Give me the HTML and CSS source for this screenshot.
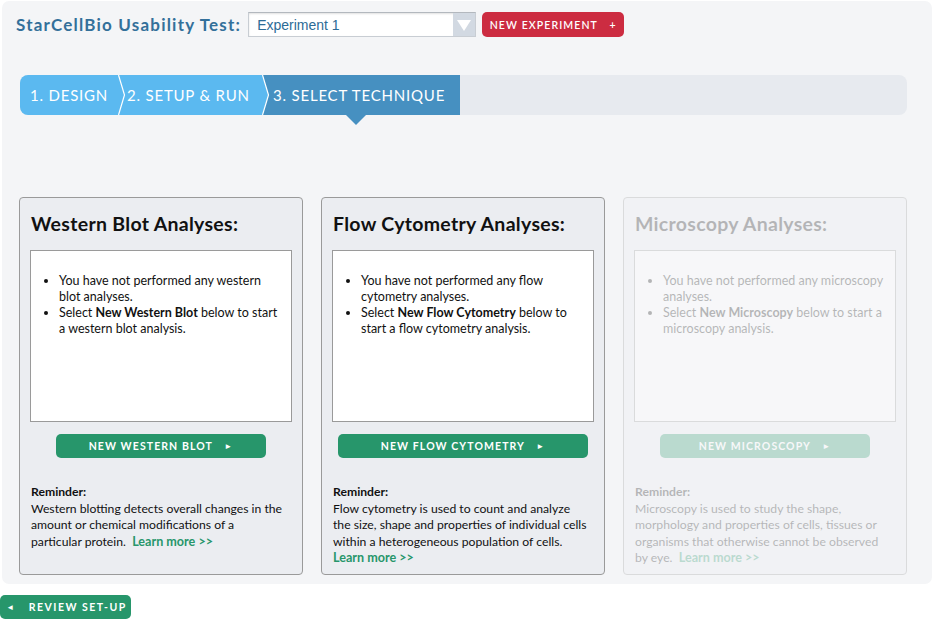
FILE: index.html
```html
<!DOCTYPE html>
<html>
<head>
<meta charset="utf-8">
<link rel="stylesheet" href="styles.css">
</head>
<body>
<div class="panel">
  <header class="topbar">
    <h1 class="app-title">StarCellBio Usability Test:</h1>
    <div class="select">
      <span class="select-value">Experiment 1</span>
      <span class="select-arrow"><svg width="14" height="12" viewBox="0 0 14 12"><polygon points="0,1 14,1 7,12" fill="#fff"/></svg></span>
    </div>
    <button class="btn btn-red">NEW EXPERIMENT <span class="plus">+</span></button>
  </header>

  <nav class="steps">
    <div class="step step-light step-first">1. DESIGN</div>
    <svg class="sep" width="8" height="40" viewBox="0 0 8 40"><polygon points="0,0 8,0 8,40 0,40" fill="#5bb9f0"/><polyline points="0.5,0 6.5,20 0.5,40" fill="none" stroke="#fff" stroke-width="1.2"/></svg>
    <div class="step step-light step-second">2. SETUP &amp; RUN</div>
    <svg class="sep" width="8" height="40" viewBox="0 0 8 40"><polygon points="0,0 8,0 8,40 0,40" fill="#4690c1"/><polygon points="0,0 0.5,0 6.5,20 0.5,40 0,40" fill="#5bb9f0"/><polyline points="0.5,0 6.5,20 0.5,40" fill="none" stroke="#fff" stroke-width="1.2"/></svg>
    <div class="step step-dark">3. SELECT TECHNIQUE<span class="pointer"></span></div>
  </nav>

  <section class="cards">
    <article class="card">
      <h2 class="card-title">Western Blot Analyses:</h2>
      <div class="card-box">
        <ul>
          <li>You have not performed any western blot analyses.</li>
          <li>Select <b>New Western Blot</b> below to start a western blot analysis.</li>
        </ul>
      </div>
      <button class="btn btn-green btn-card">NEW WESTERN BLOT <span class="tri">&#9658;</span></button>
      <div class="reminder">
        <b>Reminder:</b><br>
        Western blotting detects overall changes in the amount or chemical modifications of a particular protein.&nbsp; <a class="learn">Learn more &gt;&gt;</a>
      </div>
    </article>

    <article class="card">
      <h2 class="card-title">Flow Cytometry Analyses:</h2>
      <div class="card-box">
        <ul>
          <li>You have not performed any flow cytometry analyses.</li>
          <li>Select <b>New Flow Cytometry</b> below to start a flow cytometry analysis.</li>
        </ul>
      </div>
      <button class="btn btn-green btn-card btn-wide">NEW FLOW CYTOMETRY <span class="tri">&#9658;</span></button>
      <div class="reminder">
        <b>Reminder:</b><br>
        Flow cytometry is used to count and analyze the size, shape and properties of individual cells within a heterogeneous population of cells.<br>
        <a class="learn">Learn more &gt;&gt;</a>
      </div>
    </article>

    <article class="card card-disabled">
      <h2 class="card-title">Microscopy Analyses:</h2>
      <div class="card-box">
        <ul>
          <li>You have not performed any microscopy analyses.</li>
          <li>Select <b>New Microscopy</b> below to start a microscopy analysis.</li>
        </ul>
      </div>
      <button class="btn btn-green btn-card">NEW MICROSCOPY <span class="tri">&#9658;</span></button>
      <div class="reminder">
        <b>Reminder:</b><br>
        Microscopy is used to study the shape, morphology and properties of cells, tissues or organisms that otherwise cannot be observed by eye.&nbsp; <a class="learn">Learn more &gt;&gt;</a>
      </div>
    </article>
  </section>
</div>
<button class="btn btn-green btn-review"><span class="tri-left">&#9668;</span> REVIEW SET-UP</button>
</body>
</html>
```
FILE: styles.css
```css
* { box-sizing: border-box; }
html, body { margin: 0; padding: 0; background: #fff; }
body {
  font-family: Lato, "Noto Sans", sans-serif;
  color: #111;
  width: 936px;
  height: 624px;
  overflow: hidden;
}
.panel {
  margin: 1px 4px 0 2px;
  width: 930px;
  height: 583px;
  background: #f4f5f7;
  border-radius: 7px;
  padding: 11px 0 0 14px;
}
.topbar {
  display: flex;
  align-items: center;
  height: 25px;
}
.app-title {
  margin: 0 7px 0 0;
  font-size: 17px;
  font-weight: 700;
  letter-spacing: 1.2px;
  color: #33709a;
  white-space: nowrap;
}
.select {
  display: flex;
  width: 228px;
  height: 25px;
  background: #fff;
  border: 1px solid #c8cdd3;
  border-top-color: #b3b8be;
  box-shadow: inset 0 1px 2px rgba(0,0,0,0.12);
}
.select-value {
  flex: 1;
  font-family: "Liberation Sans", Arial, sans-serif;
  font-size: 14px;
  color: #2d6b96;
  padding: 4px 0 0 8px;
}
.select-arrow {
  width: 22px;
  background: #d2d9e2;
  display: flex;
  align-items: center;
  justify-content: center;
}
.btn {
  border: none;
  font-family: Lato, "Noto Sans", sans-serif;
  color: #fff;
  font-weight: 700;
  font-size: 10.5px;
  letter-spacing: 1.1px;
  cursor: pointer;
  border-radius: 5px;
  padding: 0;
  white-space: nowrap;
}
.btn-red {
  margin-left: 6px;
  width: 142px;
  height: 25px;
  background: #cc2c41;
  font-weight: 600;
}
.btn-red .plus { margin-left: 8px; }
.steps {
  margin-top: 38px;
  width: 887px;
  margin-left: 4px;
  height: 40px;
  background: #e7eaef;
  border-radius: 8px;
  display: flex;
}
.step {
  height: 40px;
  color: #fff;
  font-size: 15px;
  letter-spacing: 0.8px;
  display: flex;
  align-items: center;
  position: relative;
  white-space: nowrap;
  flex: none;
}
.step-light { background: #5bb9f0; }
.step-first { border-radius: 8px 0 0 8px; padding-left: 10px; width: 98px; }
.step-second { padding-left: 1px; width: 136px; }
.step-dark { background: #4690c1; padding-left: 3px; width: 190px; }
.sep { display: block; flex: none; }
.pointer {
  position: absolute;
  left: 76px;
  bottom: -10px;
  width: 0; height: 0;
  border-left: 10px solid transparent;
  border-right: 10px solid transparent;
  border-top: 10px solid #4690c1;
}
.cards {
  margin-top: 82px;
  margin-left: 3px;
  display: flex;
  gap: 18px;
}
.card {
  width: 284px;
  height: 378px;
  background: #ebedf1;
  border: 1px solid #9a9a9a;
  border-radius: 4px;
  padding: 10px 10px 0 10px;
  display: flex;
  flex-direction: column;
}
.card > * { flex: none; }
.card-disabled { opacity: 0.28; }
.card-title {
  margin: 3px 0 0 1px;
  font-size: 19.5px;
  font-weight: 700;
  letter-spacing: 0.3px;
  line-height: 26px;
  height: 39px;
  white-space: nowrap;
}
.card-box {
  height: 172px;
  background: #fff;
  border: 1px solid #9a9a9a;
  padding: 22px 9px 0 0;
}
.card-box ul {
  margin: 0;
  padding-left: 28px;
  font-size: 12.5px;
  line-height: 16px;
}
.btn-card {
  align-self: center;
  margin-top: 12px;
  width: 210px;
  height: 24px;
  background: #27966b;
}
.btn-wide { width: 250px; }
.tri { font-size: 8px; margin-left: 8px; vertical-align: 1px; }
.reminder {
  margin-top: 26px;
  margin-left: 1px;
  width: 255px;
  font-size: 12.2px;
  line-height: 16.5px;
}
.learn { color: #27966b; font-weight: 700; font-size: 12.6px; }
.btn-review {
  display: block;
  margin-top: 11px;
  width: 131px;
  height: 24px;
  background: #27966b;
  font-size: 10.5px;
  letter-spacing: 1.5px;
  padding-left: 2px;
}
.tri-left { font-size: 8px; margin-right: 9px; vertical-align: 1px; }
```
